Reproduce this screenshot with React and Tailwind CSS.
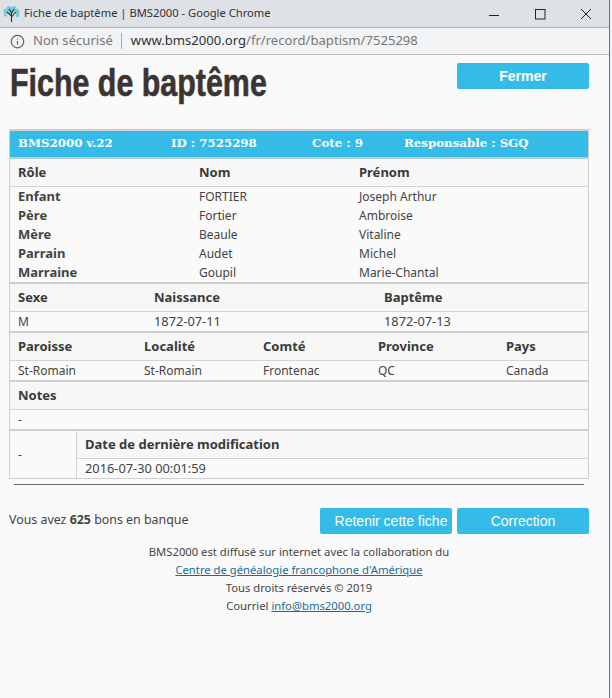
import { Info } from "lucide-react";

const people = [
  { role: "Enfant", nom: "FORTIER", prenom: "Joseph Arthur" },
  { role: "Père", nom: "Fortier", prenom: "Ambroise" },
  { role: "Mère", nom: "Beaule", prenom: "Vitaline" },
  { role: "Parrain", nom: "Audet", prenom: "Michel" },
  { role: "Marraine", nom: "Goupil", prenom: "Marie-Chantal" },
];

const headCell = "h-7 flex items-center border-b border-[#d4d4d4] bg-[#f7f7f7] font-bold text-[#3a3a3a] text-[13px]";
const valueRow = "h-[19px] flex items-center border-[#d4d4d4]";
const sectionLine = "border-t-2 border-[#cfcfcf]";
const dateText = "text-[12.8px]";

function Favicon() {
  return (
    <svg width="17" height="18" viewBox="0 0 17 18" className="shrink-0">
      <g fill="#7fc6da">
        <circle cx="3" cy="6" r="2.6" />
        <circle cx="6" cy="3.5" r="2.6" />
        <circle cx="11" cy="3.5" r="2.6" />
        <circle cx="14" cy="6.5" r="2.6" />
        <circle cx="2.5" cy="10" r="1.8" />
        <circle cx="14.5" cy="10.5" r="1.8" />
        <circle cx="8.5" cy="6" r="3" />
      </g>
      <path d="M8.5 17V7M8.5 11L4 7M8.5 12l4.5-5M8.5 8L6 4M8.5 8l2.5-4" stroke="#26343a" strokeWidth="1.1" fill="none" />
    </svg>
  );
}

function WindowControls() {
  return (
    <div className="flex items-center ml-auto">
      <svg width="12" height="12" viewBox="0 0 12 12" className="mr-[34px]">
        <path d="M1 7.5h10" stroke="#222" strokeWidth="1" />
      </svg>
      <svg width="12" height="12" viewBox="0 0 12 12" className="mr-[34px]">
        <rect x="1.5" y="1.5" width="9.5" height="9.5" fill="none" stroke="#222" strokeWidth="1" />
      </svg>
      <svg width="12" height="12" viewBox="0 0 12 12" className="mr-[17px]">
        <path d="M1 1l10 10M11 1L1 11" stroke="#222" strokeWidth="1" />
      </svg>
    </div>
  );
}

function Button({ children, className }) {
  return (
    <button className={`h-[26px] w-[132px] rounded-[2px] bg-[#35bbe8] text-white text-sm font-['Liberation_Sans',sans-serif] ${className}`}>
      {children}
    </button>
  );
}

export default function App() {
  return (
    <div className="flex h-[698px] w-[612px] overflow-hidden bg-[#fafafa] font-['Noto_Sans',sans-serif] text-xs text-[#444]">
      <div className="w-[609px] shrink-0">
        {/* Chrome popup title bar */}
        <div className="h-[28px] flex items-center gap-[4px] pl-[3px] bg-[#dee1e6] border-b border-[#b0b3b7] text-[#333] text-[11.2px]">
          <Favicon />
          <span>Fiche de baptême | BMS2000 - Google Chrome</span>
          <WindowControls />
        </div>

        {/* Address bar */}
        <div className="h-[27px] flex items-center pl-[10px] bg-[#f1f3f4] border-b border-[#b9bbbd] text-[13.1px]">
          <Info size={15} strokeWidth={2} className="text-[#5f6368]" />
          <span className="ml-2 text-[#777]">Non sécurisé</span>
          <span className="ml-2 mr-[9px] h-4 w-px bg-[#a8a8a8]" />
          <span className="text-[#333]">www.bms2000.org</span>
          <span className="text-[#777]">/fr/record/baptism/7525298</span>
        </div>

        <div className="flex items-start justify-between pl-[10px] pr-5 h-[74px]">
          <h1 className="origin-left scale-x-[0.8] whitespace-nowrap font-['Liberation_Sans',sans-serif] font-bold text-[38px] leading-[56px] text-[#3a3533] [-webkit-text-stroke:0.6px_#3a3533]">
            Fiche de baptême
          </h1>
          <Button className="mt-[8px] font-bold">Fermer</Button>
        </div>

        {/* Record table */}
        <div className="ml-[9px] w-[580px] border border-[#cfcfcf] border-t-2">
          <div className="h-[28px] flex items-center bg-[#35bbe8] border-b-2 border-[#b9cdd6] pb-px pl-2 font-['DejaVu_Serif',serif] font-bold text-[11.8px] text-white">
            <span className="w-[153px]">BMS2000 v.22</span>
            <span className="w-[141px]">ID : 7525298</span>
            <span className="w-[92px]">Cote : 9</span>
            <span>Responsable : SGQ</span>
          </div>

          <div className={`${headCell} pl-2`}>
            <span className="w-[181px]">Rôle</span>
            <span className="w-[160px]">Nom</span>
            <span>Prénom</span>
          </div>
          {people.map((p) => (
            <div key={p.role} className={`${valueRow} pl-2`}>
              <span className="w-[181px] font-bold text-[13px]">{p.role}</span>
              <span className="w-[160px]">{p.nom}</span>
              <span>{p.prenom}</span>
            </div>
          ))}

          <div className={sectionLine}>
            <div className={`${headCell} pl-2`}>
              <span className="w-[136px]">Sexe</span>
              <span className="w-[230px]">Naissance</span>
              <span>Baptême</span>
            </div>
            <div className={`${valueRow} pl-2`}>
              <span className="w-[136px]">M</span>
              <span className={`w-[230px] ${dateText}`}>1872-07-11</span>
              <span className={dateText}>1872-07-13</span>
            </div>
          </div>

          <div className={sectionLine}>
            <div className={`${headCell} pl-2`}>
              <span className="w-[126px]">Paroisse</span>
              <span className="w-[119px]">Localité</span>
              <span className="w-[115px]">Comté</span>
              <span className="w-[128px]">Province</span>
              <span>Pays</span>
            </div>
            <div className={`${valueRow} pl-2`}>
              <span className="w-[126px]">St-Romain</span>
              <span className="w-[119px]">St-Romain</span>
              <span className="w-[115px]">Frontenac</span>
              <span className="w-[128px]">QC</span>
              <span>Canada</span>
            </div>
          </div>

          <div className={sectionLine}>
            <div className={`${headCell} pl-2`}>Notes</div>
            <div className={`${valueRow} pl-2`}>-</div>
          </div>

          <div className={`flex ${sectionLine}`}>
            <div className="w-[67px] shrink-0 flex items-center pl-2 border-r border-[#d4d4d4]">-</div>
            <div className="flex-1">
              <div className={`${headCell} pl-2`}>Date de dernière modification</div>
              <div className={`${valueRow} pl-2 ${dateText}`}>2016-07-30 00:01:59</div>
            </div>
          </div>
        </div>

        <hr className="ml-[14px] mt-[5px] w-[570px] border-t border-[#666]" />

        <div className="flex items-center mt-[23px] pl-[9px]">
          <span className="w-[311px] pb-[2px] text-[12.4px]">
            Vous avez <b>625</b> bons en banque
          </span>
          <Button className="pl-[10px]">Retenir cette fiche</Button>
          <Button className="ml-[5px]">Correction</Button>
        </div>

        <div className="mt-[9px] ml-[9px] w-[580px] text-center text-[11.25px] leading-[18px]">
          <p>BMS2000 est diffusé sur internet avec la collaboration du</p>
          <p>
            <a href="#" className="underline text-[#1d6a96]">Centre de généalogie francophone d'Amérique</a>
          </p>
          <p>Tous droits réservés © 2019</p>
          <p>
            Courriel <a href="#" className="underline text-[#1d6a96]">info@bms2000.org</a>
          </p>
        </div>
      </div>
      <div className="w-[3px] border-l border-[#3f7fb5] bg-[#eef1f4]" />
    </div>
  );
}
